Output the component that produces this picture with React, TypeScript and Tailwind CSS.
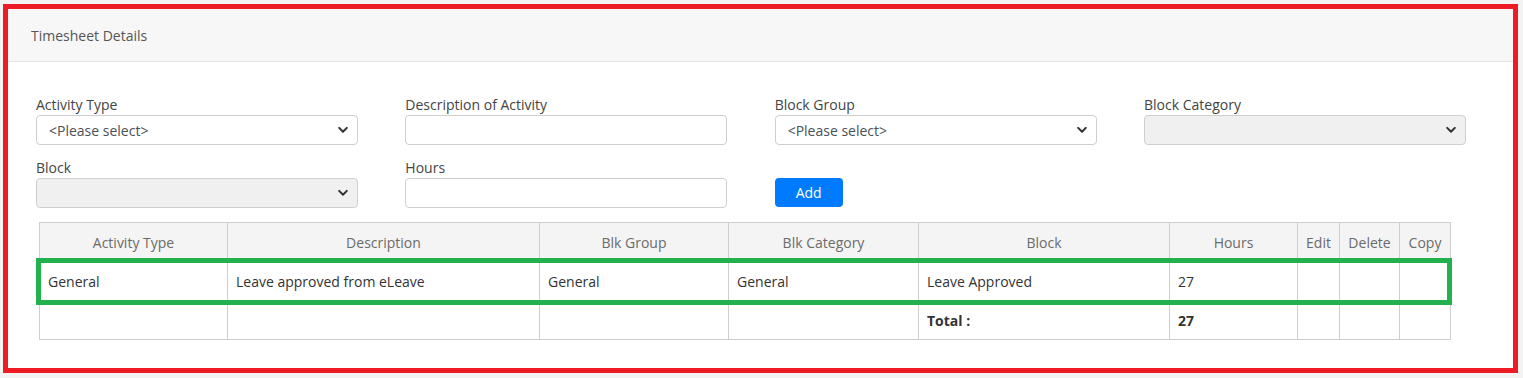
import React from "react";

const font = { fontFamily: '"Open Sans", "Noto Sans", Arial, sans-serif' };

function Chevron() {
  return (
    <svg width="10" height="7" viewBox="0 0 10 7" className="pointer-events-none absolute right-[9px] top-1/2 -translate-y-1/2">
      <path d="M1.2 1.4 L5 5.2 L8.8 1.4" fill="none" stroke="#333" strokeWidth="2" strokeLinecap="round" strokeLinejoin="round" />
    </svg>
  );
}

function SelectBox({ value, disabled }: { value?: string; disabled?: boolean }) {
  return (
    <div
      className={`relative h-[30px] w-full rounded-[4px] border border-[#cfcfcf] ${disabled ? "bg-[#f0f0f0]" : "bg-white"}`}
    >
      <span className="absolute left-[12px] top-1/2 -translate-y-1/2 text-[14px] text-[#495057]">{value}</span>
      <Chevron />
    </div>
  );
}

function Field({ label, children }: { label: string; children: React.ReactNode }) {
  return (
    <div className="flex flex-col">
      <label className="h-[20px] text-[14px] leading-[20px] text-[#444]">{label}</label>
      {children}
    </div>
  );
}

const cols = [
  { name: "Activity Type", w: 188 },
  { name: "Description", w: 312 },
  { name: "Blk Group", w: 189 },
  { name: "Blk Category", w: 190 },
  { name: "Block", w: 251 },
  { name: "Hours", w: 128 },
  { name: "Edit", w: 42 },
  { name: "Delete", w: 60 },
  { name: "Copy", w: 51 },
];

const row = ["General", "Leave approved from eLeave", "General", "General", "Leave Approved", "27", "", "", ""];
const total = ["", "", "", "", "Total :", "27", "", "", ""];

export default function App() {
  return (
    <div className="relative min-h-[378px] w-[1523px] bg-[#f3f3f3] pl-[3px] pt-[4px]" style={font}>
      <div className="h-[369px] w-[1515px] border-[5px] border-[#ed1c24] bg-white">
        <div className="flex h-[53px] items-center border-b border-[#e4e4e4] bg-[#f7f7f7] pl-[23px] text-[14px] text-[#555]">
          Timesheet Details
        </div>

        <div className="pl-[28px] pt-[33px]">
          <div className="grid grid-cols-[322px_322px_322px_322px] gap-x-[47.33px] gap-y-[13px]">
            <Field label="Activity Type">
              <SelectBox value="<Please select>" />
            </Field>
            <Field label="Description of Activity">
              <div className="h-[30px] rounded-[4px] border border-[#cfcfcf] bg-white" />
            </Field>
            <Field label="Block Group">
              <SelectBox value="<Please select>" />
            </Field>
            <Field label="Block Category">
              <SelectBox disabled />
            </Field>
            <Field label="Block">
              <SelectBox disabled />
            </Field>
            <Field label="Hours">
              <div className="h-[30px] rounded-[4px] border border-[#cfcfcf] bg-white" />
            </Field>
            <div className="flex flex-col pt-[20px]">
              <button className="h-[29px] w-[68px] rounded-[4px] bg-[#007bff] text-[14px] text-white">Add</button>
            </div>
          </div>
        </div>

        <div className="pl-[31px] pt-[14px]">
          <table className="border-collapse text-[14px]">
            <thead>
              <tr className="bg-[#f4f4f4]">
                {cols.map((c) => (
                  <th
                    key={c.name}
                    style={{ width: c.w }}
                    className="h-[39px] border border-[#cfcfcf] p-0 text-center font-normal text-[#6b6b6b]"
                  >
                    {c.name}
                  </th>
                ))}
              </tr>
            </thead>
            <tbody>
              <tr>
                {row.map((v, i) => (
                  <td key={i} className="h-[39px] border border-[#cfcfcf] px-[8px] py-0 text-[#333]">
                    {v}
                  </td>
                ))}
              </tr>
              <tr>
                {total.map((v, i) => (
                  <td key={i} className="h-[39px] border border-[#cfcfcf] px-[8px] py-0 font-bold text-[#333]">
                    {v}
                  </td>
                ))}
              </tr>
            </tbody>
          </table>
        </div>
      </div>

      {/* highlight around the data row */}
      <div className="pointer-events-none absolute left-[36px] top-[258px] h-[47px] w-[1416px] border-[5px] border-[#22b14c]" />
    </div>
  );
}
